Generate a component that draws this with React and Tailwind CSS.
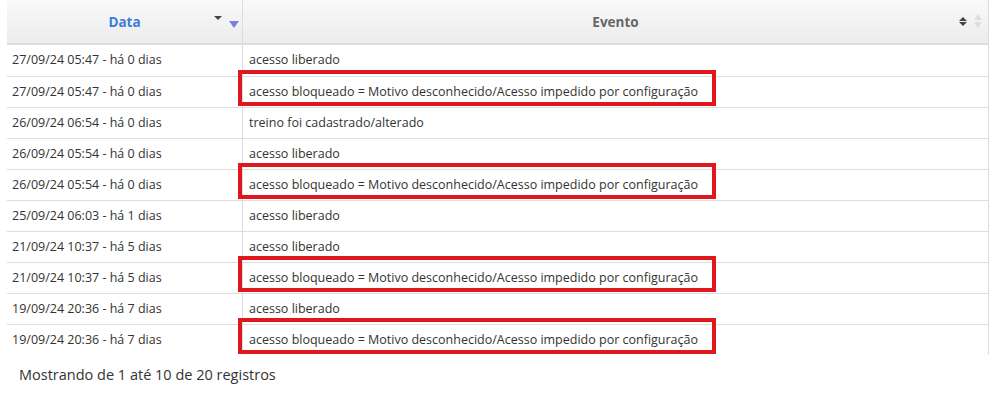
import React from 'react';

const rows = [
  { data: '27/09/24 05:47 - há 0 dias', evento: 'acesso liberado' },
  { data: '27/09/24 05:47 - há 0 dias', evento: 'acesso bloqueado = Motivo desconhecido/Acesso impedido por configuração', flag: true },
  { data: '26/09/24 06:54 - há 0 dias', evento: 'treino foi cadastrado/alterado' },
  { data: '26/09/24 05:54 - há 0 dias', evento: 'acesso liberado' },
  { data: '26/09/24 05:54 - há 0 dias', evento: 'acesso bloqueado = Motivo desconhecido/Acesso impedido por configuração', flag: true },
  { data: '25/09/24 06:03 - há 1 dias', evento: 'acesso liberado' },
  { data: '21/09/24 10:37 - há 5 dias', evento: 'acesso liberado' },
  { data: '21/09/24 10:37 - há 5 dias', evento: 'acesso bloqueado = Motivo desconhecido/Acesso impedido por configuração', flag: true },
  { data: '19/09/24 20:36 - há 7 dias', evento: 'acesso liberado' },
  { data: '19/09/24 20:36 - há 7 dias', evento: 'acesso bloqueado = Motivo desconhecido/Acesso impedido por configuração', flag: true },
];

const App = () => {
  return (
    <div className="w-[990px] h-[395px] bg-white pl-[7px] pr-px" style={{ fontFamily: '"Open Sans", sans-serif' }}>
      <div className="border-r border-[#ddd]">
        <div className="flex h-[45px] border-b-2 border-[#ddd] bg-gradient-to-b from-[#f9f9f9] to-[#ececec]">
          <div className="relative w-[236px] flex items-center justify-center pt-[2px] border-r border-[#ddd] text-[13.5px] font-bold text-[#3b7dd8]">
            Data
            <span className="absolute left-[207px] top-[16px] w-0 h-0 border-l-[4px] border-r-[4px] border-t-[4px] border-l-transparent border-r-transparent border-t-[#444]" />
            <span className="absolute left-[222px] top-[21px] w-0 h-0 border-l-[5px] border-r-[5px] border-t-[7px] border-l-transparent border-r-transparent border-t-[#7b7fe0]" />
          </div>
          <div className="relative flex-1 flex items-center justify-center pt-[2px] text-[13.5px] font-bold text-[#666]">
            Evento
            <span className="absolute right-[21px] top-[17px] flex flex-col gap-px">
              <span className="w-0 h-0 border-l-[4px] border-r-[4px] border-b-[4px] border-l-transparent border-r-transparent border-b-[#444]" />
              <span className="w-0 h-0 border-l-[4px] border-r-[4px] border-t-[4px] border-l-transparent border-r-transparent border-t-[#444]" />
            </span>
            <span className="absolute right-[6px] top-[14px] flex flex-col gap-[2px]">
              <span className="w-0 h-0 border-l-[4px] border-r-[4px] border-b-[6px] border-l-transparent border-r-transparent border-b-[#ddd]" />
              <span className="w-0 h-0 border-l-[4px] border-r-[4px] border-t-[6px] border-l-transparent border-r-transparent border-t-[#ddd]" />
            </span>
          </div>
        </div>
        {rows.map((r, i) => (
          <div key={i} className={`flex h-[31px] text-[12.5px] text-[#333] ${i > 0 ? 'border-t border-[#ddd]' : ''}`}>
            <div className="w-[236px] flex items-center pl-[5px] border-r border-[#ddd]">{r.data}</div>
            <div className="relative flex-1 flex items-center pl-[6px]">
              {r.evento}
              {r.flag && (
                <span className="absolute left-[-5px] top-[-7px] w-[478px] h-[36px] border-4 border-[#e0181d] pointer-events-none" />
              )}
            </div>
          </div>
        ))}
      </div>
      <div className="pl-[12px] pt-[9px] text-[14.5px] text-[#333]">Mostrando de 1 até 10 de 20 registros</div>
    </div>
  );
};

export default App;
